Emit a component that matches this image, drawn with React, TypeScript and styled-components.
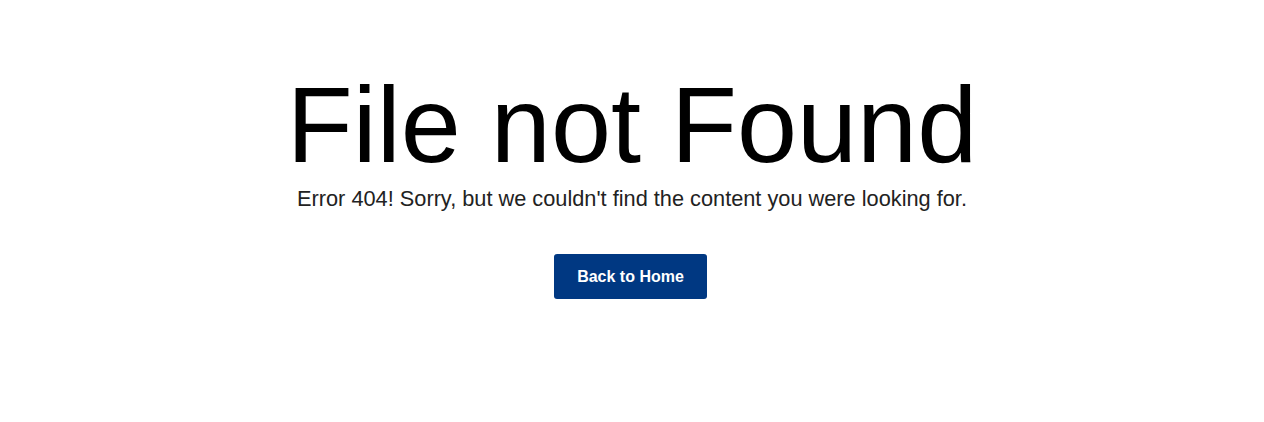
import React from "react";
import styled, { createGlobalStyle } from "styled-components";

const Global = createGlobalStyle`
  html, body { margin: 0; padding: 0; background: #fff; }
  body { font-family: "Liberation Sans", Arial, sans-serif; }
`;

const Page = styled.main`
  display: flex;
  flex-direction: column;
  align-items: center;
  padding-top: 63px;
`;

const Title = styled.h1`
  margin: 0;
  font-size: 108px;
  font-weight: 400;
  line-height: 124px;
  color: #000;
`;

const Message = styled.p`
  margin: 0;
  font-size: 21.75px;
  line-height: 24px;
  color: #222;
`;

const HomeButton = styled.a`
  margin: 43px 3px 0 0;
  display: inline-flex;
  align-items: center;
  justify-content: center;
  width: 153px;
  height: 45px;
  background: #003882;
  border-radius: 3px;
  color: #fff;
  font-size: 16px;
  font-weight: 700;
  text-decoration: none;
`;

export default function App() {
  return (
    <>
      <Global />
      <Page>
        <Title>File not Found</Title>
        <Message>Error 404! Sorry, but we couldn't find the content you were looking for.</Message>
        <HomeButton href="#">Back to Home</HomeButton>
      </Page>
    </>
  );
}
